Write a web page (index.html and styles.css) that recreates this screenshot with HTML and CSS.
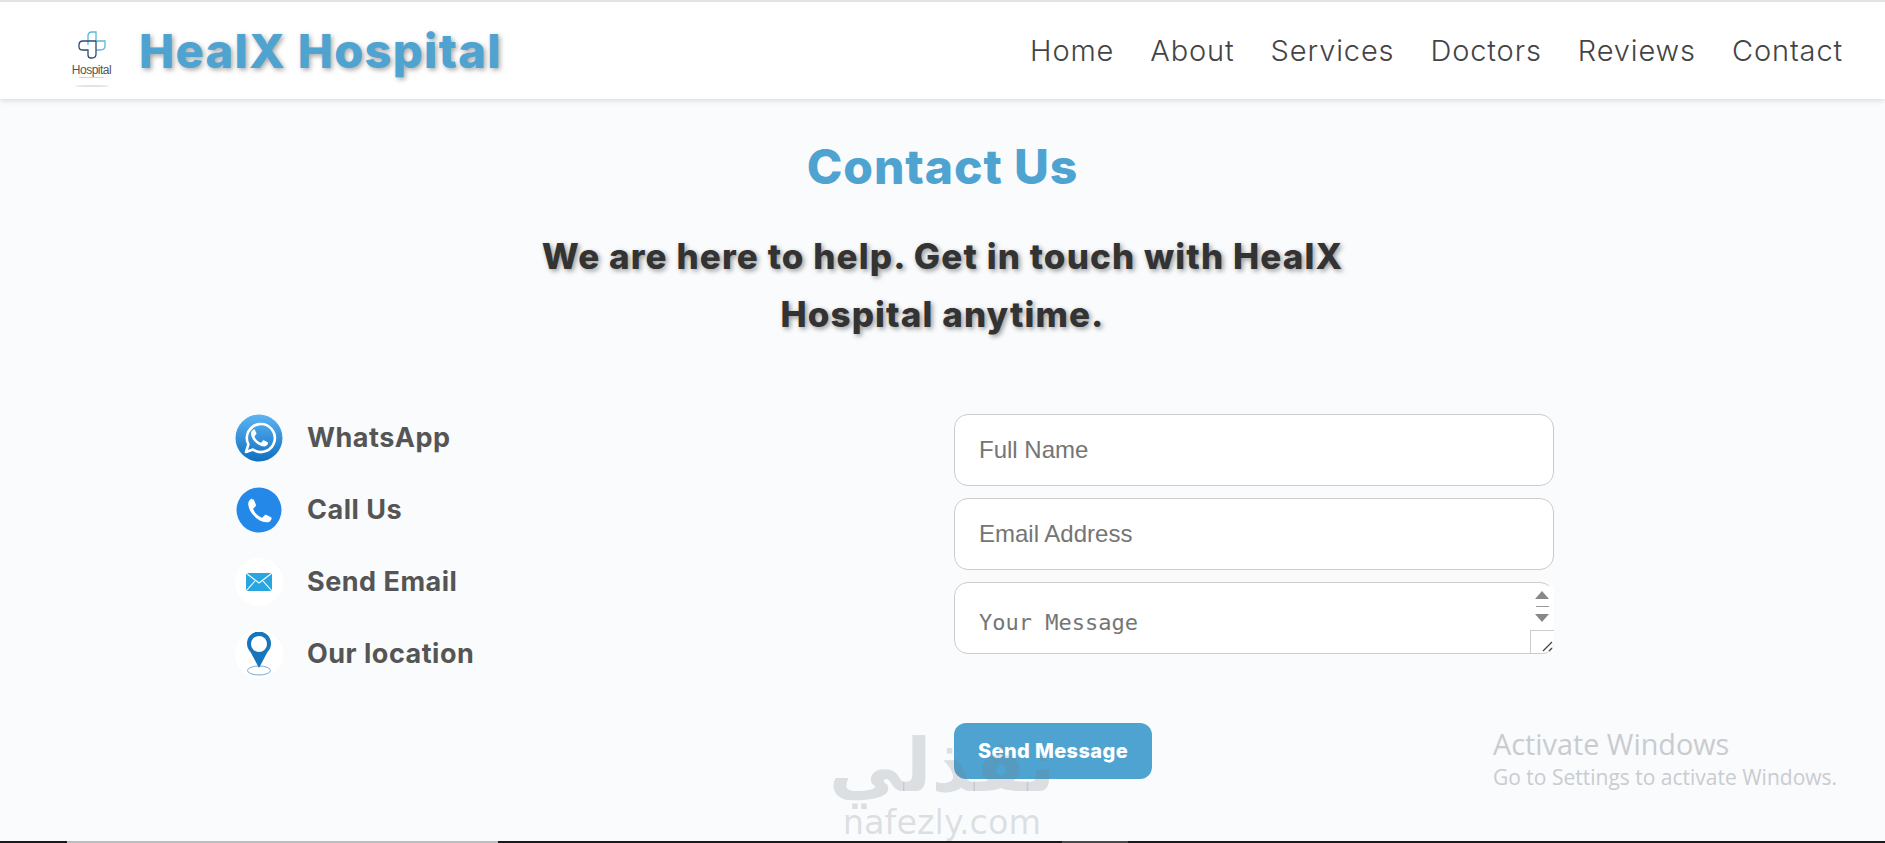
FILE: index.html
```html
<!DOCTYPE html>
<html lang="en">
<head>
<meta charset="utf-8">
<title>HealX Hospital</title>
<link rel="stylesheet" href="styles.css">
</head>
<body>
<header class="site-header">
  <div class="brand">
    <svg class="logo" width="50" height="74" viewBox="0 0 50 74" fill="none">
      <path d="M19 31V22Q19 18 23 18H27V27H36V32Q36 36 31 36H27" stroke="#5bb7dc" stroke-width="1.300"/>
      <path d="M27 27H14Q10 27 10 31V33Q10 36 14 36H19V41Q19 44 22 44H23Q27 44 27 40V27" stroke="#2a4a78" stroke-width="1.300"/>
      <text class="logo-text" x="22.500" y="60" text-anchor="middle">Hospital</text>
      <path d="M10 63.500H35" stroke="#ccc" stroke-width=".8"/>
      <ellipse cx="23" cy="72" rx="17" ry="1" fill="#e2e2e2"/>
    </svg>
    <span class="brand-name">HealX Hospital</span>
  </div>
  <nav class="nav">
    <a>Home</a><a>About</a><a>Services</a><a>Doctors</a><a>Reviews</a><a>Contact</a>
  </nav>
</header>

<main class="contact">
  <h1 class="title">Contact Us</h1>
  <p class="lead">We are here to help. Get in touch with HealX Hospital anytime.</p>
  <div class="columns">
    <ul class="channels">
      <li class="channel">
        <span class="icon">
          <svg width="48" height="48" viewBox="0 0 48 48">
            <defs><linearGradient id="wa" x1="0" y1="0" x2="0" y2="1"><stop offset="0" stop-color="#5db4f2"/><stop offset="1" stop-color="#0f6fc0"/></linearGradient></defs>
            <circle cx="24" cy="24" r="23.500" fill="url(#wa)"/>
            <path d="M11 38l2.400-7.600A14 14 0 1 1 18 35.600z" fill="none" stroke="#fff" stroke-width="2.600" stroke-linejoin="round"/>
            <path d="M19 15.500c-1.500.5-3 2-3 4 0 6 7 13 13 13 2 0 3.600-1.400 4-3 .2-.8-.2-1.200-.8-1.500l-3-1.500c-.7-.3-1.100-.2-1.500.3l-1.200 1.500c-.4.400-.8.400-1.300.2-2.500-1-4.500-3-5.500-5.500-.2-.5-.1-.9.200-1.200l1.200-1.300c.4-.4.500-.9.200-1.500l-1.300-3c-.3-.6-.8-.8-1.500-.5z" fill="#fff"/>
          </svg>
        </span>
        <span class="channel-label">WhatsApp</span>
      </li>
      <li class="channel">
        <span class="icon">
          <svg width="48" height="48" viewBox="0 0 48 48">
            <circle cx="24" cy="24" r="22.500" fill="#2488e8"/>
            <path d="M17 12.500c-2 .7-4 2.800-3.800 5.800.5 8 9.500 17.500 18 18 2.800.2 4.700-1.500 5.300-3.400.3-1-.1-1.600-.9-2l-4-2c-.8-.4-1.400-.3-2 .3l-1.800 2.100c-.4.400-.8.500-1.400.2-3.800-1.600-6.400-4.300-8-8-.2-.6-.1-1 .3-1.400l1.800-1.700c.5-.6.600-1.200.3-2l-1.800-4.400c-.4-.8-1-1-2-.5z" fill="#fff"/>
          </svg>
        </span>
        <span class="channel-label">Call Us</span>
      </li>
      <li class="channel">
        <span class="icon icon-disc">
          <svg width="26" height="18" viewBox="0 0 26 18">
            <rect width="26" height="18" fill="#28a6e0"/>
            <path d="M0 0l13 10L26 0M0 18l9-10M26 18l-9-10" fill="none" stroke="#fff" stroke-width="1.100"/>
          </svg>
        </span>
        <span class="channel-label">Send Email</span>
      </li>
      <li class="channel">
        <span class="icon icon-disc">
          <svg width="26" height="44" viewBox="0 0 26 44">
            <ellipse cx="13" cy="38.500" rx="11.500" ry="4.500" fill="none" stroke="#7aa9cf" stroke-width="1"/>
            <path d="M13 36L4.500 20A12 12 0 1 1 21.500 20z" fill="#1775bb"/>
            <circle cx="13" cy="12" r="8" fill="#fff"/>
          </svg>
        </span>
        <span class="channel-label">Our location</span>
      </li>
    </ul>
    <form class="form">
      <input class="field" type="text" placeholder="Full Name">
      <input class="field" type="email" placeholder="Email Address">
      <div class="area-wrap">
        <textarea class="field area" placeholder="Your Message"></textarea>
        <div class="scrollbar">
          <span class="arrow-up"></span>
          <span class="thumb-line"></span>
          <span class="arrow-down"></span>
        </div>
        <div class="resizer">
          <svg width="14" height="14" viewBox="0 0 14 14"><path d="M3 12L12 3M9 12l3-3" stroke="#444" stroke-width="1.300"/></svg>
        </div>
      </div>
      <button class="send" type="button">Send Message</button>
    </form>
  </div>
</main>
<div class="taskbar-edge"><span class="seg-light"></span><span class="seg-dark"></span></div>

<div class="activate">
  <div class="activate-title">Activate Windows</div>
  <div class="activate-sub">Go to Settings to activate Windows.</div>
</div>
<div class="watermark">
  <div class="wm-ar" lang="ar" dir="rtl">نفذلي</div>
  <div class="wm-en">nafezly.com</div>
</div>
</body>
</html>
```
FILE: styles.css
```css
* { box-sizing: border-box; }
html, body { margin: 0; height: 100%; }
body {
  height: 843px;
  overflow: hidden;
  display: flex;
  flex-direction: column;
  background: #f9fbfd;
  font-family: Inter, "Open Sans", sans-serif;
  color: #555;
  position: relative;
}
.site-header {
  height: 99px;
  flex: none;
  display: flex;
  align-items: center;
  justify-content: space-between;
  padding: 0 42px 0 69px;
  background: #fff;
  border-top: 2px solid #e3e3e3;
  box-shadow: 0 2px 5px rgba(0,0,0,.12);
}
.brand { display: flex; align-items: center; gap: 20px; }
.logo { display: block; }
.logo-text { font: 400 12px "Liberation Sans", sans-serif; fill: #555; letter-spacing: -.5px; }
.brand-name {
  font-size: 47px;
  font-weight: 800;
  color: #4fa3d1;
  text-shadow: 2px 2px 5px rgba(0,0,0,.35);
  letter-spacing: 1.300px;
}
.nav { display: flex; gap: 36px; }
.nav a { font-size: 29px; font-weight: 300; color: #444; letter-spacing: .87px; }
.contact { flex: 1; display: flex; flex-direction: column; align-items: center; min-height: 0; }
.title {
  margin: 39px 0 0;
  font-size: 48px;
  line-height: 58px;
  font-weight: 800;
  color: #4fa3d1;
  letter-spacing: .9px;
}
.lead {
  margin: 31px 0 0;
  width: 840px;
  text-align: center;
  font-size: 35px;
  line-height: 58px;
  font-weight: 800;
  color: #333;
  letter-spacing: 1.100px;
  text-shadow: 2px 2px 5px rgba(0,0,0,.4);
}
.columns {
  margin: 71px 0 0 235px;
  align-self: flex-start;
  width: 1319px;
  display: flex;
  justify-content: space-between;
}
.channels { list-style: none; margin: 0; padding: 0; display: flex; flex-direction: column; gap: 24px; }
.channel { display: flex; align-items: center; gap: 24px; height: 48px; }
.icon { width: 48px; height: 48px; flex: none; display: flex; align-items: center; justify-content: center; border-radius: 50%; }
.icon-disc { background: #fff; }
.channel-label { font-size: 27px; font-weight: 700; color: #555; letter-spacing: .5px; padding-bottom: 2px; }
.form { width: 600px; display: flex; flex-direction: column; align-items: flex-start; gap: 12px; }
.field {
  display: block;
  width: 600px;
  height: 72px;
  padding: 0 24px;
  border: 1px solid #ccc;
  border-radius: 14px;
  background: #fff;
  font: 24px "Liberation Sans", sans-serif;
  color: #333;
}
.field::placeholder { color: #757575; opacity: 1; }
.area-wrap { position: relative; width: 600px; height: 72px; }
.area {
  padding: 27px 24px 0;
  resize: none;
  font: 22px/26px "DejaVu Sans Mono", monospace;
}
.scrollbar {
  position: absolute;
  top: 4px;
  right: 0;
  width: 24px;
  height: 44px;
  background: #fff;
  display: flex;
  flex-direction: column;
  align-items: center;
  padding-top: 5px;
  gap: 6px;
}
.arrow-up { width: 0; height: 0; border: 7px solid transparent; border-top: 0; border-bottom: 8px solid #888; }
.arrow-down { width: 0; height: 0; border: 7px solid transparent; border-bottom: 0; border-top: 8px solid #888; }
.thumb-line { width: 13px; height: 1px; background: #999; margin-top: 1px; margin-bottom: 1px; }
.resizer {
  position: absolute;
  right: 0;
  bottom: 0;
  width: 24px;
  height: 24px;
  background: #fff;
  border: 1px solid #ccc;
  border-right: 0;
  border-radius: 0 0 12px 0;
  display: flex;
  align-items: flex-end;
  justify-content: flex-end;
}
.send {
  margin-top: 57px;
  width: 198px;
  height: 56px;
  border: 0;
  border-radius: 12px;
  background: #4fa3d1;
  color: #fff;
  font-family: Inter, sans-serif;
  font-size: 20px;
  font-weight: 800;
  letter-spacing: .4px;
}
.taskbar-edge { flex: none; height: 2px; background: #1a1a1a; display: flex; padding-left: 67px; }
.seg-light { width: 431px; background: #bdbdbd; }
.seg-dark { width: 66px; margin-left: 564px; background: #4a4a4a; }
.activate { position: absolute; left: 1493px; top: 727px; font-family: "Open Sans", sans-serif; color: #c9cccf; }
.activate-title { font-size: 28.800px; line-height: 34px; }
.activate-sub { font-size: 21px; line-height: 33px; }
.watermark { position: absolute; left: 826px; top: 722px; width: 232px; text-align: center; color: rgba(120,125,130,.22); pointer-events: none; }
.wm-ar { font: 700 74px/86px "DejaVu Sans", sans-serif; }
.wm-en { font: 400 33.500px/36px "DejaVu Sans", sans-serif; margin-top: -3px; }
```
